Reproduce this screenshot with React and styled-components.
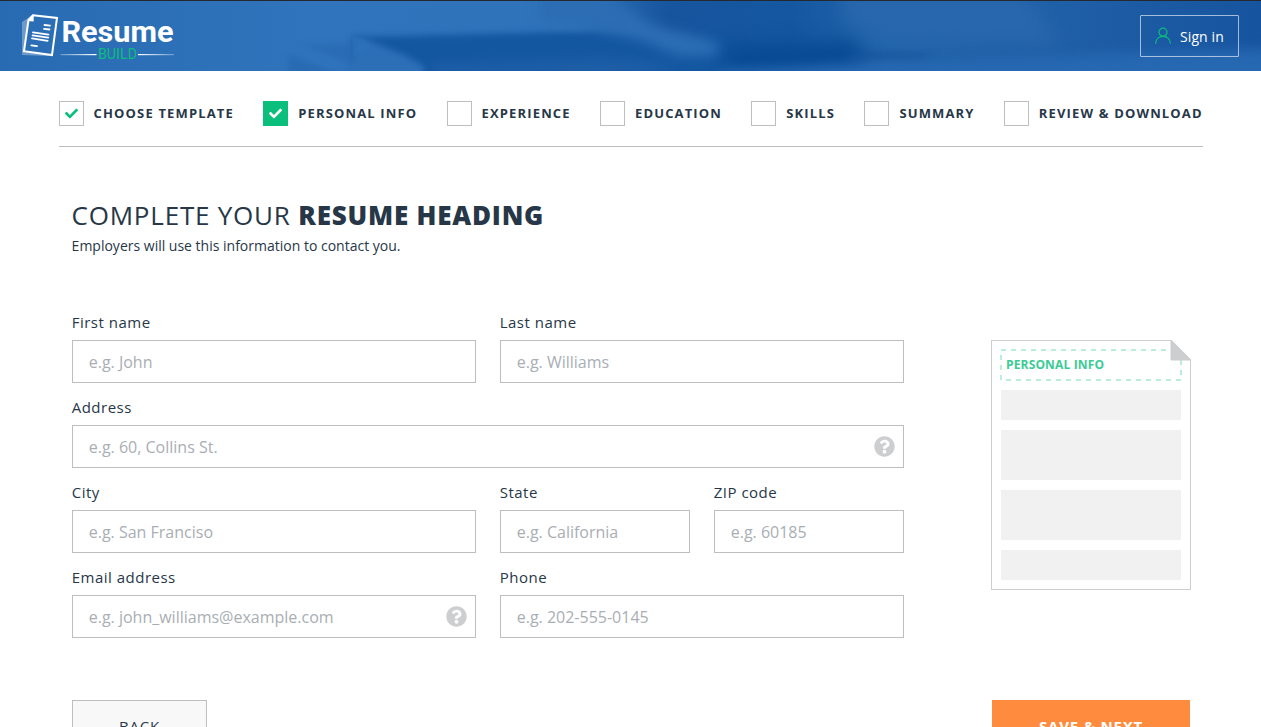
import React from "react";
import styled, { createGlobalStyle, css } from "styled-components";
import { FaCheck, FaQuestionCircle } from "react-icons/fa";

const GlobalStyle = createGlobalStyle`
  *, *::before, *::after { box-sizing: border-box; }
  body {
    margin: 0;
    height: 727px;
    overflow: hidden;
    background: #fff;
    color: #273748;
    font-family: "Open Sans", "Noto Sans", sans-serif;
  }
`;

const Header = styled.header`
  position: relative;
  display: flex;
  align-items: flex-start;
  justify-content: space-between;
  height: 71px;
  padding: 0 22px 0 20px;
  border-top: 1px solid #26282f;
  background: #2a6cb4;
  overflow: hidden;
`;

const Backdrop = styled.svg`
  position: absolute;
  inset: 0;
`;

const Logo = styled.svg`
  position: relative;
  width: 160px;
  height: 70px;
  font-family: Roboto, sans-serif;
`;

const SignIn = styled.button`
  position: relative;
  display: flex;
  align-items: center;
  width: 99px;
  height: 42px;
  margin-top: 14px;
  padding: 1px 0 0 14px;
  gap: 9px;
  border: 1px solid rgba(255, 255, 255, 0.6);
  border-radius: 1px;
  background: transparent;
  color: #fff;
  font: 400 14px/20px "Open Sans", sans-serif;
  letter-spacing: 0.1px;
  white-space: nowrap;

  svg { margin-bottom: 1px; }
`;

const Steps = styled.nav`
  display: flex;
  justify-content: space-between;
  width: 1144.2px;
  height: 76px;
  margin-left: 58.6px;
  padding-top: 30px;
  border-bottom: 1px solid #bcbec0;
`;

const Step = styled.div`
  display: flex;
  align-items: flex-start;
  gap: 10px;
  height: 25px;
  font-size: 13px;
  line-height: 24px;
  font-weight: 700;
  letter-spacing: 1.15px;
  white-space: nowrap;
`;

const StepBox = styled.span`
  display: flex;
  align-items: center;
  justify-content: center;
  width: 25px;
  height: 25px;
  border: 1px solid #bcbec0;
  color: #0abf7b;
  font-size: 13px;
  ${(p) =>
    p.$active &&
    css`
      border-color: #0abf7b;
      background: #0abf7b;
      color: #fff;
    `}
`;

const Main = styled.main`
  padding: 48px 70px 0 72px;
`;

const Title = styled.h1`
  margin: 0 0 0 -0.5px;
  font-size: 26px;
  line-height: 40px;
  font-weight: 400;
  letter-spacing: 0.79px;
  white-space: nowrap;

  strong { font-weight: 800; }
`;

const Subtitle = styled.p`
  margin: 1px 0 0 -0.4px;
  font-size: 14px;
  line-height: 20px;
`;

const Body = styled.div`
  display: flex;
  justify-content: space-between;
  margin-top: 56px;
`;

const Form = styled.form`
  display: grid;
  grid-template-columns: 404px 190px 190px;
  column-gap: 24px;
  grid-auto-rows: 85px;
  width: 832px;
`;

const FieldBlock = styled.label`
  display: block;
  grid-column: span ${(p) => p.$span};
`;

const Label = styled.span`
  display: block;
  height: 28px;
  margin-left: -0.3px;
  font-size: 15px;
  line-height: 20px;
  letter-spacing: 0.5px;
`;

const Control = styled.span`
  display: flex;
  align-items: center;
  height: 43px;
  padding: 0 8px 0 15.7px;
  border: 1px solid #bcbec0;
  color: #cdced0;
  font-size: 21px;
`;

const Input = styled.input`
  flex: 1;
  min-width: 0;
  height: 100%;
  padding: 0;
  border: 0;
  outline: 0;
  background: transparent;
  font: 400 16px "Open Sans", sans-serif;
  color: #273748;

  &::placeholder { color: #a9aeb4; opacity: 1; }
`;

const Preview = styled.aside`
  position: relative;
  width: 200px;
  height: 250px;
  margin-top: 28px;
  padding: 49px 9px 0;
  display: flex;
  flex-direction: column;
  gap: 10px;
  border: 1px solid #cdced0;
`;

const PreviewMark = styled.svg`
  position: absolute;
  top: -1px;
  left: -1px;
  font: 700 12px "Open Sans", sans-serif;
`;

const PreviewBlock = styled.div`
  flex: none;
  height: ${(p) => p.$height}px;
  background: #f1f1f1;
`;

const Actions = styled.footer`
  display: flex;
  justify-content: space-between;
  margin-top: 48px;
  padding-right: 1px;
`;

const Button = styled.button`
  width: ${(p) => (p.$primary ? 198 : 135)}px;
  height: 52px;
  padding: 0;
  border: 1px solid ${(p) => (p.$primary ? "#ff8c3e" : "#bcbec0")};
  background: ${(p) => (p.$primary ? "#ff8c3e" : "#f8f8f8")};
  color: ${(p) => (p.$primary ? "#fff" : "#273748")};
  font: ${(p) => (p.$primary ? 700 : 400)} 15px/20px "Open Sans", sans-serif;
  letter-spacing: 0.8px;
`;

const steps = [
  { name: "CHOOSE TEMPLATE", done: true },
  { name: "PERSONAL INFO", done: true, active: true },
  { name: "EXPERIENCE" },
  { name: "EDUCATION" },
  { name: "SKILLS" },
  { name: "SUMMARY" },
  { name: "REVIEW & DOWNLOAD" },
];

const fields = [
  { label: "First name", hint: "e.g. John", span: 1 },
  { label: "Last name", hint: "e.g. Williams", span: 2 },
  { label: "Address", hint: "e.g. 60, Collins St.", span: 3, help: true },
  { label: "City", hint: "e.g. San Franciso", span: 1 },
  { label: "State", hint: "e.g. California", span: 1 },
  { label: "ZIP code", hint: "e.g. 60185", span: 1 },
  { label: "Email address", hint: "e.g. john_williams@example.com", span: 1, help: true },
  { label: "Phone", hint: "e.g. 202-555-0145", span: 2 },
];

function Blur({ id, size }) {
  return (
    <filter id={id} filterUnits="userSpaceOnUse" x="-60" y="-60" width="1400" height="200" colorInterpolationFilters="sRGB">
      <feGaussianBlur stdDeviation={size} />
    </filter>
  );
}

function HeaderBackdrop() {
  return (
    <Backdrop width="1261" height="70" viewBox="0 1 1261 70" aria-hidden="true">
      <defs>
        <linearGradient id="base">
          <stop offset="0" stopColor="#296bb2" />
          <stop offset="0.25" stopColor="#2f74bc" />
          <stop offset="0.46" stopColor="#2f73ba" />
          <stop offset="0.53" stopColor="#17559e" />
          <stop offset="0.63" stopColor="#1557a1" />
          <stop offset="0.7" stopColor="#2365ab" />
          <stop offset="0.85" stopColor="#1f5fa7" />
          <stop offset="1" stopColor="#17549f" />
        </linearGradient>
        <Blur id="soft1" size="1" />
        <Blur id="soft3" size="3" />
        <Blur id="soft6" size="6" />
        <Blur id="soft9" size="9" />
      </defs>
      <rect y="1" width="1261" height="70" fill="url(#base)" />
      <path d="M286 100 L289 54 L350 78 L350 100 Z" fill="#2466ae" opacity="0.6" filter="url(#soft3)" />
      <path d="M300 44 L352 44 L352 65 Z" fill="#286ab2" opacity="0.7" filter="url(#soft3)" />
      <path d="M353 37 L600 31 L740 40 L760 110 L353 110 Z" fill="#1457a1" filter="url(#soft3)" />
      <path d="M430 64 L600 58 L680 64 L640 76 L430 76 Z" fill="#2261aa" opacity="0.7" filter="url(#soft6)" />
      <path d="M353 37 L366 39 L405 55 L424 66 L420 110 L330 110 L345 68 L353 58 Z" fill="#2c6fb7" filter="url(#soft3)" />
      <path d="M353 37 L364 39 L372 46 L353 58 Z" fill="#2d71b9" opacity="0.7" filter="url(#soft1)" />
      <path d="M725 46 L855 40 L865 66 L725 70 Z" fill="#084a92" filter="url(#soft9)" />
      <path d="M540 -40 L596 -40 L616 2 L650 24 L720 43 L714 56 L678 56 L640 40 L590 28 L540 20 Z" fill="#2c6db4" filter="url(#soft6)" />
      <path d="M846 -40 L1000 -40 L1060 44 L900 40 L855 28 L844 16 Z" fill="#2867ad" filter="url(#soft9)" />
      <path d="M860 50 L935 54 L920 60 L840 62 Z" fill="#15539d" opacity="0.6" filter="url(#soft3)" />
      <path d="M720 72 L860 66 L1100 55 L1300 48 L1300 110 L720 110 Z" fill="#2768b2" filter="url(#soft6)" />
    </Backdrop>
  );
}

function ResumeLogo() {
  return (
    <Logo viewBox="20 1 160 70">
      <defs>
        <linearGradient id="lineL"><stop offset="0" stopColor="#fff" stopOpacity="0.3" /><stop offset="1" stopColor="#fff" /></linearGradient>
        <linearGradient id="lineR"><stop offset="0" stopColor="#fff" /><stop offset="1" stopColor="#fff" stopOpacity="0.3" /></linearGradient>
      </defs>
      <path d="M22 22 L28 18 L33 14 L25 50 L49 54 L49 56 L22 55 Z" fill="#fff" opacity="0.32" />
      <path d="M33 15.2 L57 18 L52 55 L24 51.2 L28.5 20 Z" fill="#2c6eb5" stroke="#fff" strokeWidth="2" />
      <path d="M27.6 21 L33.8 14.5 L33.6 21.4 Z" fill="#fff" />
      <path d="M44.5 25 L50 25.7 M44 28.8 L49.5 29.5 M33 32.3 L48.5 34.7 M32.6 35.3 L48.2 37.7 M32 38.4 L47.6 40.8 M31.3 45.4 L37 46.2" fill="none" stroke="#fff" strokeWidth="1.8" strokeLinecap="round" />
      <text x="61.5" y="42" fontSize="29.5" fontWeight="700" fill="#fff" textLength="112" lengthAdjust="spacingAndGlyphs">Resume</text>
      <rect x="60.5" y="54" width="36" height="1.2" fill="url(#lineL)" />
      <rect x="138" y="54" width="36" height="1.2" fill="url(#lineR)" />
      <text x="98" y="59.2" fontSize="14" fill="#0abf7b" textLength="39" lengthAdjust="spacingAndGlyphs">BUILD</text>
    </Logo>
  );
}

function UserIcon() {
  return (
    <svg width="16" height="18" viewBox="0 0 16 18" fill="none" stroke="#0abf7b" strokeWidth="1.2" strokeLinecap="round" aria-hidden="true">
      <circle cx="8" cy="5.2" r="4" />
      <path d="M0.8 16.3 C0.8 11.8 4 9.3 8 9.3 C12 9.3 15.2 11.8 15.2 16.3" />
    </svg>
  );
}

function Field({ label, hint, span, help }) {
  return (
    <FieldBlock $span={span}>
      <Label>{label}</Label>
      <Control>
        <Input placeholder={hint} />
        {help && <FaQuestionCircle />}
      </Control>
    </FieldBlock>
  );
}

export default function App() {
  return (
    <>
      <GlobalStyle />
      <Header>
        <HeaderBackdrop />
        <ResumeLogo />
        <SignIn><UserIcon />Sign in</SignIn>
      </Header>
      <Steps>
        {steps.map((s) => (
          <Step key={s.name}>
            <StepBox $active={s.active}>{s.done && <FaCheck />}</StepBox>
            {s.name}
          </Step>
        ))}
      </Steps>
      <Main>
        <Title>COMPLETE YOUR <strong>RESUME HEADING</strong></Title>
        <Subtitle>Employers will use this information to contact you.</Subtitle>
        <Body>
          <Form>
            {fields.map((f) => <Field key={f.label} {...f} />)}
          </Form>
          <Preview>
            <PreviewBlock $height={30} />
            <PreviewBlock $height={50} />
            <PreviewBlock $height={50} />
            <PreviewBlock $height={30} />
            <PreviewMark width="200" height="50" viewBox="0 0 200 50">
              <g fill="none" stroke="#baeedb" strokeWidth="2">
                <path d="M10 10 H180" strokeDasharray="5 5" />
                <path d="M190 20 V40" strokeDasharray="5 5" />
                <path d="M15 40 H190" strokeDasharray="5 5" />
                <path d="M10 15 V40" strokeDasharray="5 5" />
              </g>
              <text x="15" y="29" fill="#3bcb95" textLength="98">PERSONAL INFO</text>
              <path d="M180 0 H200 V20 Z" fill="#fff" />
              <path d="M180 0 L200 20 H180 Z" fill="#cdced0" stroke="#cdced0" />
            </PreviewMark>
          </Preview>
        </Body>
        <Actions>
          <Button>BACK</Button>
          <Button $primary>SAVE &amp; NEXT</Button>
        </Actions>
      </Main>
    </>
  );
}
